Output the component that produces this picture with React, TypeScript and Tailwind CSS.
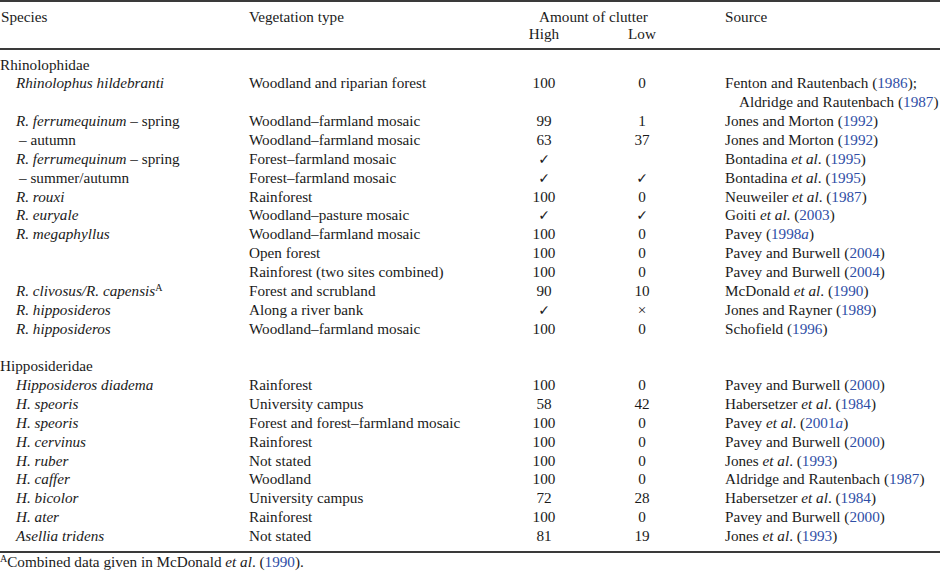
import type { ReactNode } from "react";

const Y = ({ children }: { children: ReactNode }) => <span className="text-[#2f4ea6]">{children}</span>;
const Et = () => <i>et al</i>;
const Check = () => <span className="font-['DejaVu_Sans'] text-[14px]">✓</span>;

type Row = {
  sp?: ReactNode;
  indent?: "sp" | "dash";
  veg?: string;
  high?: ReactNode;
  low?: ReactNode;
  src?: ReactNode;
};

const rows: Row[] = [
  { sp: "Rhinolophidae" },
  {
    sp: <i>Rhinolophus hildebranti</i>,
    indent: "sp",
    veg: "Woodland and riparian forest",
    high: "100",
    low: "0",
    src: (
      <>
        Fenton and Rautenbach (<Y>1986</Y>);
      </>
    ),
  },
  {
    src: (
      <span className="pl-[14px]">
        Aldridge and Rautenbach (<Y>1987</Y>)
      </span>
    ),
  },
  {
    sp: (
      <>
        <i>R. ferrumequinum</i> – spring
      </>
    ),
    indent: "sp",
    veg: "Woodland–farmland mosaic",
    high: "99",
    low: "1",
    src: (
      <>
        Jones and Morton (<Y>1992</Y>)
      </>
    ),
  },
  {
    sp: "– autumn",
    indent: "dash",
    veg: "Woodland–farmland mosaic",
    high: "63",
    low: "37",
    src: (
      <>
        Jones and Morton (<Y>1992</Y>)
      </>
    ),
  },
  {
    sp: (
      <>
        <i>R. ferrumequinum</i> – spring
      </>
    ),
    indent: "sp",
    veg: "Forest–farmland mosaic",
    high: <Check />,
    src: (
      <>
        Bontadina <Et />. (<Y>1995</Y>)
      </>
    ),
  },
  {
    sp: "– summer/autumn",
    indent: "dash",
    veg: "Forest–farmland mosaic",
    high: <Check />,
    low: <Check />,
    src: (
      <>
        Bontadina <Et />. (<Y>1995</Y>)
      </>
    ),
  },
  {
    sp: <i>R. rouxi</i>,
    indent: "sp",
    veg: "Rainforest",
    high: "100",
    low: "0",
    src: (
      <>
        Neuweiler <Et />. (<Y>1987</Y>)
      </>
    ),
  },
  {
    sp: <i>R. euryale</i>,
    indent: "sp",
    veg: "Woodland–pasture mosaic",
    high: <Check />,
    low: <Check />,
    src: (
      <>
        Goiti <Et />. (<Y>2003</Y>)
      </>
    ),
  },
  {
    sp: <i>R. megaphyllus</i>,
    indent: "sp",
    veg: "Woodland–farmland mosaic",
    high: "100",
    low: "0",
    src: (
      <>
        Pavey (<Y>
          1998<i>a</i>
        </Y>)
      </>
    ),
  },
  {
    veg: "Open forest",
    high: "100",
    low: "0",
    src: (
      <>
        Pavey and Burwell (<Y>2004</Y>)
      </>
    ),
  },
  {
    veg: "Rainforest (two sites combined)",
    high: "100",
    low: "0",
    src: (
      <>
        Pavey and Burwell (<Y>2004</Y>)
      </>
    ),
  },
  {
    sp: (
      <>
        <i>R. clivosus/R. capensis</i>
        <sup className="text-[10px]">A</sup>
      </>
    ),
    indent: "sp",
    veg: "Forest and scrubland",
    high: "90",
    low: "10",
    src: (
      <>
        McDonald <Et />. (<Y>1990</Y>)
      </>
    ),
  },
  {
    sp: <i>R. hipposideros</i>,
    indent: "sp",
    veg: "Along a river bank",
    high: <Check />,
    low: "×",
    src: (
      <>
        Jones and Rayner (<Y>1989</Y>)
      </>
    ),
  },
  {
    sp: <i>R. hipposideros</i>,
    indent: "sp",
    veg: "Woodland–farmland mosaic",
    high: "100",
    low: "0",
    src: (
      <>
        Schofield (<Y>1996</Y>)
      </>
    ),
  },
  {},
  { sp: "Hipposideridae" },
  {
    sp: <i>Hipposideros diadema</i>,
    indent: "sp",
    veg: "Rainforest",
    high: "100",
    low: "0",
    src: (
      <>
        Pavey and Burwell (<Y>2000</Y>)
      </>
    ),
  },
  {
    sp: <i>H. speoris</i>,
    indent: "sp",
    veg: "University campus",
    high: "58",
    low: "42",
    src: (
      <>
        Habersetzer <Et />. (<Y>1984</Y>)
      </>
    ),
  },
  {
    sp: <i>H. speoris</i>,
    indent: "sp",
    veg: "Forest and forest–farmland mosaic",
    high: "100",
    low: "0",
    src: (
      <>
        Pavey <Et />. (<Y>
          2001<i>a</i>
        </Y>)
      </>
    ),
  },
  {
    sp: <i>H. cervinus</i>,
    indent: "sp",
    veg: "Rainforest",
    high: "100",
    low: "0",
    src: (
      <>
        Pavey and Burwell (<Y>2000</Y>)
      </>
    ),
  },
  {
    sp: <i>H. ruber</i>,
    indent: "sp",
    veg: "Not stated",
    high: "100",
    low: "0",
    src: (
      <>
        Jones <Et />. (<Y>1993</Y>)
      </>
    ),
  },
  {
    sp: <i>H. caffer</i>,
    indent: "sp",
    veg: "Woodland",
    high: "100",
    low: "0",
    src: (
      <>
        Aldridge and Rautenbach (<Y>1987</Y>)
      </>
    ),
  },
  {
    sp: <i>H. bicolor</i>,
    indent: "sp",
    veg: "University campus",
    high: "72",
    low: "28",
    src: (
      <>
        Habersetzer <Et />. (<Y>1984</Y>)
      </>
    ),
  },
  {
    sp: <i>H. ater</i>,
    indent: "sp",
    veg: "Rainforest",
    high: "100",
    low: "0",
    src: (
      <>
        Pavey and Burwell (<Y>2000</Y>)
      </>
    ),
  },
  {
    sp: <i>Asellia tridens</i>,
    indent: "sp",
    veg: "Not stated",
    high: "81",
    low: "19",
    src: (
      <>
        Jones <Et />. (<Y>1993</Y>)
      </>
    ),
  },
];

const grid = "grid grid-cols-[249px_270px_50px_146px_1fr]";

export default function App() {
  return (
    <div className="w-[940px] h-[575px] bg-white text-[#1a1a1a] font-['Liberation_Serif',serif] text-[15.2px] overflow-hidden">
      <div className="border-t-2 border-[#3a3a3a]" />
      <div className={`${grid} pt-[5.5px] pb-[6.5px] leading-[17px]`}>
        <div className="pl-px">Species</div>
        <div>Vegetation type</div>
        <div className="col-span-2 pl-[20px]">
          <div>Amount of clutter</div>
          <div className="grid grid-cols-[50px_146px] -ml-[20px]">
            <div className="text-center">High</div>
            <div className="text-center">Low</div>
          </div>
        </div>
        <div className="pl-[10px]">Source</div>
      </div>
      <div className="border-t-2 border-[#3a3a3a]" />
      <div className="pt-[5.5px] pb-[5px] leading-[18.86px]">
        {rows.map((r, i) => (
          <div key={i} className={`${grid} h-[18.86px] whitespace-nowrap`}>
            <div className={r.indent === "sp" ? "pl-[16px]" : r.indent === "dash" ? "pl-[19px]" : ""}>{r.sp}</div>
            <div>{r.veg}</div>
            <div className="text-center">{r.high}</div>
            <div className="text-center">{r.low}</div>
            <div className="pl-[10px]">{r.src}</div>
          </div>
        ))}
      </div>
      <div className="border-t-2 border-[#3a3a3a]" />
      <p className="leading-[18.86px]">
        <sup className="text-[10px]">A</sup>Combined data given in McDonald <Et />. (<Y>1990</Y>).
      </p>
    </div>
  );
}
